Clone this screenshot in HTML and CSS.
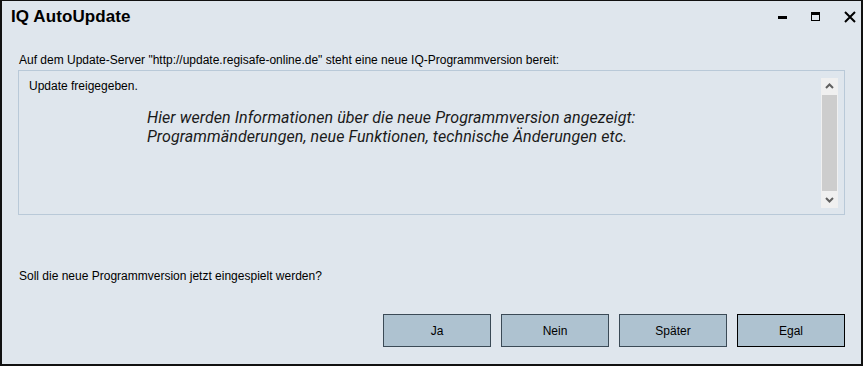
FILE: index.html
```html
<!DOCTYPE html>
<html>
  <head>
    <title>IQ AutoUpdate</title>
    <link rel="stylesheet" href="styles.css">
  </head>
  <body>
    <div class="window">
      <div class="titlebar">
        <h1 class="title">IQ AutoUpdate</h1>
        <div class="controls">
          <svg class="ctl" width="34" height="22" viewBox="0 0 34 22"><rect x="16" y="15" width="9" height="3" fill="#000"/></svg>
          <svg class="ctl" width="34" height="22" viewBox="0 0 34 22"><rect x="15.5" y="11.5" width="8" height="8" fill="none" stroke="#000"/><rect x="15" y="11" width="9" height="3" fill="#000"/></svg>
          <svg class="ctl" width="34" height="22" viewBox="0 0 34 22"><path d="M15 11 L25 21 M25 11 L15 21" stroke="#000" stroke-width="2" fill="none"/></svg>
        </div>
      </div>
      <div class="content">
        <p class="label">Auf dem Update-Server "http://update.regisafe-online.de" steht eine neue IQ-Programmversion bereit:</p>
        <div class="infobox">
          <div class="infotext">
            <p class="status">Update freigegeben.</p>
            <p class="note">Hier werden Informationen über die neue Programmversion angezeigt:<br>Programmänderungen, neue Funktionen, technische Änderungen etc.</p>
          </div>
          <div class="scrollbar">
            <svg width="17" height="17" viewBox="0 0 17 17"><path d="M5 10 L8.5 6.5 L12 10" stroke="#606060" stroke-width="2" fill="none"/></svg>
            <div class="thumb"></div>
            <svg width="17" height="17" viewBox="0 0 17 17"><path d="M5 7 L8.5 10.5 L12 7" stroke="#606060" stroke-width="2" fill="none"/></svg>
          </div>
        </div>
        <p class="question">Soll die neue Programmversion jetzt eingespielt werden?</p>
        <div class="buttons">
          <button class="btn">Ja</button>
          <button class="btn">Nein</button>
          <button class="btn">Später</button>
          <button class="btn default">Egal</button>
        </div>
      </div>
    </div>
  </body>
</html>
```

FILE: styles.css
```css
/* Dialog window */
body {
  margin: 0;
  font-family: "Liberation Sans", Arial, sans-serif;
  font-size: 12px;
  color: #000;
}
.window {
  width: 863px;
  height: 366px;
  box-sizing: border-box;
  border: 2px solid #111;
  border-top-width: 1px;
  background-color: #dfe6ed;
  display: flex;
  flex-direction: column;
}
.titlebar {
  height: 36px;
  display: flex;
  justify-content: space-between;
  align-items: flex-start;
}
.title {
  margin: 6px 0 0 9px;
  font-size: 17px;
  font-weight: bold;
  letter-spacing: 0.1px;
}
.controls {
  display: flex;
  margin-right: -3px;
}
.ctl {
  display: block;
}
.content {
  padding: 0 16px 0 16px;
  display: flex;
  flex-direction: column;
  flex: 1;
}
.label {
  margin: 16px 0 3px 1px;
  line-height: 14px;
}
.infobox {
  height: 145px;
  box-sizing: border-box;
  border: 1px solid #b9c9d8;
  display: flex;
  justify-content: space-between;
}
.infotext {
  padding: 8px 0 0 10px;
}
.status {
  margin: 0;
  line-height: 14px;
}
.note {
  margin: 15px 0 0 118px;
  font-family: Roboto, sans-serif;
  font-style: italic;
  font-size: 16px;
  letter-spacing: 0.08px;
  line-height: 19px;
  color: #1a1a1a;
}
.scrollbar {
  width: 17px;
  margin: 7px 6px 6px 0;
  background-color: #f0f0f0;
  display: flex;
  flex-direction: column;
}
.scrollbar svg {
  display: block;
}
.thumb {
  flex: 1;
  margin: 0 1px;
  background-color: #cdcdcd;
}
.question {
  margin: 54px 0 0 1px;
  line-height: 14px;
}
.buttons {
  display: flex;
  justify-content: flex-end;
  gap: 10px;
  margin-top: 31px;
  margin-right: 0;
}
.btn {
  width: 108px;
  height: 33px;
  background-color: #aec2d0;
  border: 1px solid #3b4a56;
  font-family: "Liberation Sans", Arial, sans-serif;
  font-size: 12px;
  color: #000;
  padding: 0;
}
.btn.default {
  border-color: #000;
}
```
